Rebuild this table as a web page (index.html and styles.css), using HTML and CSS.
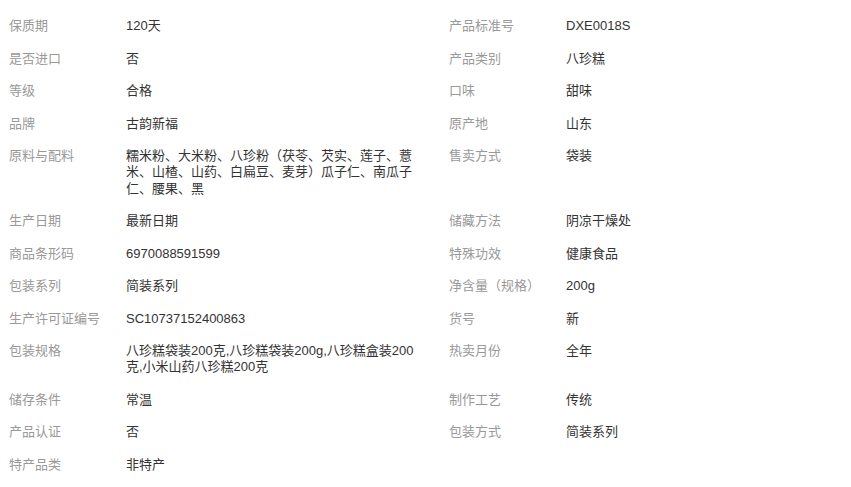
FILE: index.html
```html
<!DOCTYPE html>
<html lang="zh-CN">
<head>
    <meta charset="UTF-8">
    <meta name="viewport" content="width=device-width, initial-scale=1.0">
    <title>产品参数</title>
    <link rel="stylesheet" href="styles.css">
</head>
<body>
    <div class="params">
        <div class="item"><span class="label">保质期</span><span class="value">120天</span></div>
        <div class="item"><span class="label">产品标准号</span><span class="value">DXE0018S</span></div>

        <div class="item"><span class="label">是否进口</span><span class="value">否</span></div>
        <div class="item"><span class="label">产品类别</span><span class="value">八珍糕</span></div>

        <div class="item"><span class="label">等级</span><span class="value">合格</span></div>
        <div class="item"><span class="label">口味</span><span class="value">甜味</span></div>

        <div class="item"><span class="label">品牌</span><span class="value">古韵新福</span></div>
        <div class="item"><span class="label">原产地</span><span class="value">山东</span></div>

        <div class="item"><span class="label">原料与配料</span><span class="value">糯米粉、大米粉、八珍粉（茯苓、芡实、莲子、薏米、山楂、山药、白扁豆、麦芽）瓜子仁、南瓜子仁、腰果、黑</span></div>
        <div class="item"><span class="label">售卖方式</span><span class="value">袋装</span></div>

        <div class="item"><span class="label">生产日期</span><span class="value">最新日期</span></div>
        <div class="item"><span class="label">储藏方法</span><span class="value">阴凉干燥处</span></div>

        <div class="item"><span class="label">商品条形码</span><span class="value">6970088591599</span></div>
        <div class="item"><span class="label">特殊功效</span><span class="value">健康食品</span></div>

        <div class="item"><span class="label">包装系列</span><span class="value">简装系列</span></div>
        <div class="item"><span class="label">净含量（规格）</span><span class="value">200g</span></div>

        <div class="item"><span class="label">生产许可证编号</span><span class="value">SC10737152400863</span></div>
        <div class="item"><span class="label">货号</span><span class="value">新</span></div>

        <div class="item"><span class="label">包装规格</span><span class="value">八珍糕袋装200克,八珍糕袋装200g,八珍糕盒装200克,小米山药八珍糕200克</span></div>
        <div class="item"><span class="label">热卖月份</span><span class="value">全年</span></div>

        <div class="item"><span class="label">储存条件</span><span class="value">常温</span></div>
        <div class="item"><span class="label">制作工艺</span><span class="value">传统</span></div>

        <div class="item"><span class="label">产品认证</span><span class="value">否</span></div>
        <div class="item"><span class="label">包装方式</span><span class="value">简装系列</span></div>

        <div class="item"><span class="label">特产品类</span><span class="value">非特产</span></div>
    </div>
</body>
</html>
```

FILE: styles.css
```css
body {
    margin: 0;
    background-color: #fff;
    font-family: "Liberation Sans", "Noto Sans CJK SC", sans-serif;
    font-size: 13px;
    line-height: 16.25px;
}

.params {
    display: grid;
    grid-template-columns: 440px 440px;
    padding: 10px 0 0 9px;
}

.item {
    display: flex;
    padding: 8.125px 0;
}

.label {
    flex: 0 0 117px;
    color: #999;
}

.value {
    width: 296px;
    color: #333;
    word-break: break-all;
}
```
